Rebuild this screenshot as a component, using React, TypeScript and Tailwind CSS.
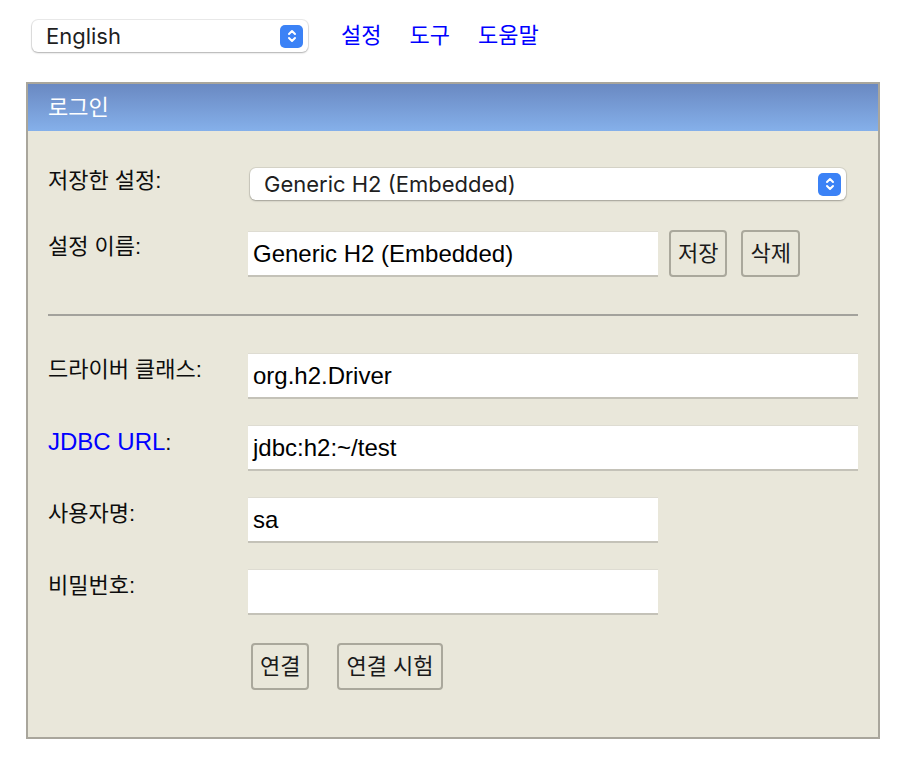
import React from "react";

const labelFont = { fontFamily: '"Liberation Sans", "Noto Sans CJK KR", sans-serif' };

function SelectBox({ value, className }: { value: string; className: string }) {
  return (
    <div
      className={`flex items-center justify-between rounded-[6px] bg-white pl-[14px] pr-[5px] shadow-[0_0_0_1px_rgba(0,0,0,0.08),0_1px_2px_rgba(0,0,0,0.25)] ${className}`}
    >
      <span className="text-[22px] text-[#1f1f1f] leading-none" style={{ fontFamily: 'Inter, "Liberation Sans", sans-serif' }}>
        {value}
      </span>
      <span className="flex h-[23px] w-[23px] items-center justify-center rounded-[5px] bg-[#3b82f6]">
        <svg width="12" height="16" viewBox="0 0 12 16" fill="none" stroke="white" strokeWidth="2" strokeLinecap="round" strokeLinejoin="round">
          <path d="M3 6 L6 3 L9 6" />
          <path d="M3 10 L6 13 L9 10" />
        </svg>
      </span>
    </div>
  );
}

function TextInput({ value, className }: { value: string; className: string }) {
  return (
    <div
      className={`flex h-[46px] items-center bg-white border-t border-t-[#dedcd2] border-b-2 border-b-[#c4c2b8] pl-[5px] text-[24px] text-black ${className}`}
      style={{ fontFamily: '"Liberation Sans", sans-serif' }}
    >
      {value}
    </div>
  );
}

function Btn({ children }: { children: React.ReactNode }) {
  return (
    <button
      className="h-[47px] rounded-[4px] border-2 border-[#aaa89c] bg-[#e9e7da] px-[7px] text-[22px] text-[#1a1a1a]"
      style={labelFont}
    >
      {children}
    </button>
  );
}

function Label({ children }: { children: React.ReactNode }) {
  return (
    <div className="pt-[4px] text-[22px] leading-[26px] text-[#0d0d0d]" style={labelFont}>
      {children}
    </div>
  );
}

export default function App() {
  return (
    <div className="min-h-screen bg-white" style={labelFont}>
      <div className="flex items-center pl-[32px] pt-[20px]">
        <SelectBox value="English" className="h-[32px] w-[276px]" />
        <div className="ml-[33px] flex gap-[28px] text-[22px] leading-none text-[#0000ff]">
          <a>설정</a>
          <a>도구</a>
          <a>도움말</a>
        </div>
      </div>

      <div className="ml-[26px] mt-[30px] w-[854px] border-2 border-[#a9a69c] bg-[#e9e7da]">
        <div className="flex h-[47px] items-center bg-gradient-to-b from-[#6a89c2] to-[#85b0ea] pl-[20px] text-[22px] text-white">
          로그인
        </div>

        <div className="px-[20px] pt-[37px] pb-[47px]">
          <div className="grid grid-cols-[200px_1fr] items-start">
            <div className="text-[22px] leading-[26px] text-[#0d0d0d]">저장한 설정:</div>
            <SelectBox value="Generic H2 (Embedded)" className="ml-[2px] mr-[12px] h-[32px]" />
          </div>

          <div className="mt-[30px] grid grid-cols-[200px_1fr] items-start">
            <Label>설정 이름:</Label>
            <div className="flex items-start gap-[11px]">
              <TextInput value="Generic H2 (Embedded)" className="mt-px w-[410px]" />
              <Btn>저장</Btn>
              <div className="ml-[3px]">
                <Btn>삭제</Btn>
              </div>
            </div>
          </div>

          <div className="mt-[37px] h-[2px] bg-[#a3a29c]" />

          <div className="mt-[37px] flex flex-col gap-[26px]">
            <div className="grid grid-cols-[200px_1fr] items-start">
              <Label>드라이버 클래스:</Label>
              <TextInput value="org.h2.Driver" className="w-full" />
            </div>
            <div className="grid grid-cols-[200px_1fr] items-start">
              <Label>
                <a className="text-[24px] text-[#0000ff]">JDBC URL</a>:
              </Label>
              <TextInput value="jdbc:h2:~/test" className="w-full" />
            </div>
            <div className="grid grid-cols-[200px_1fr] items-start">
              <Label>사용자명:</Label>
              <TextInput value="sa" className="w-[410px]" />
            </div>
            <div className="grid grid-cols-[200px_1fr] items-start">
              <Label>비밀번호:</Label>
              <TextInput value="" className="w-[410px]" />
            </div>
          </div>

          <div className="mt-[28px] grid grid-cols-[200px_1fr]">
            <div />
            <div className="flex gap-[28px] pl-[3px]">
              <Btn>연결</Btn>
              <Btn>연결 시험</Btn>
            </div>
          </div>
        </div>
      </div>
    </div>
  );
}
